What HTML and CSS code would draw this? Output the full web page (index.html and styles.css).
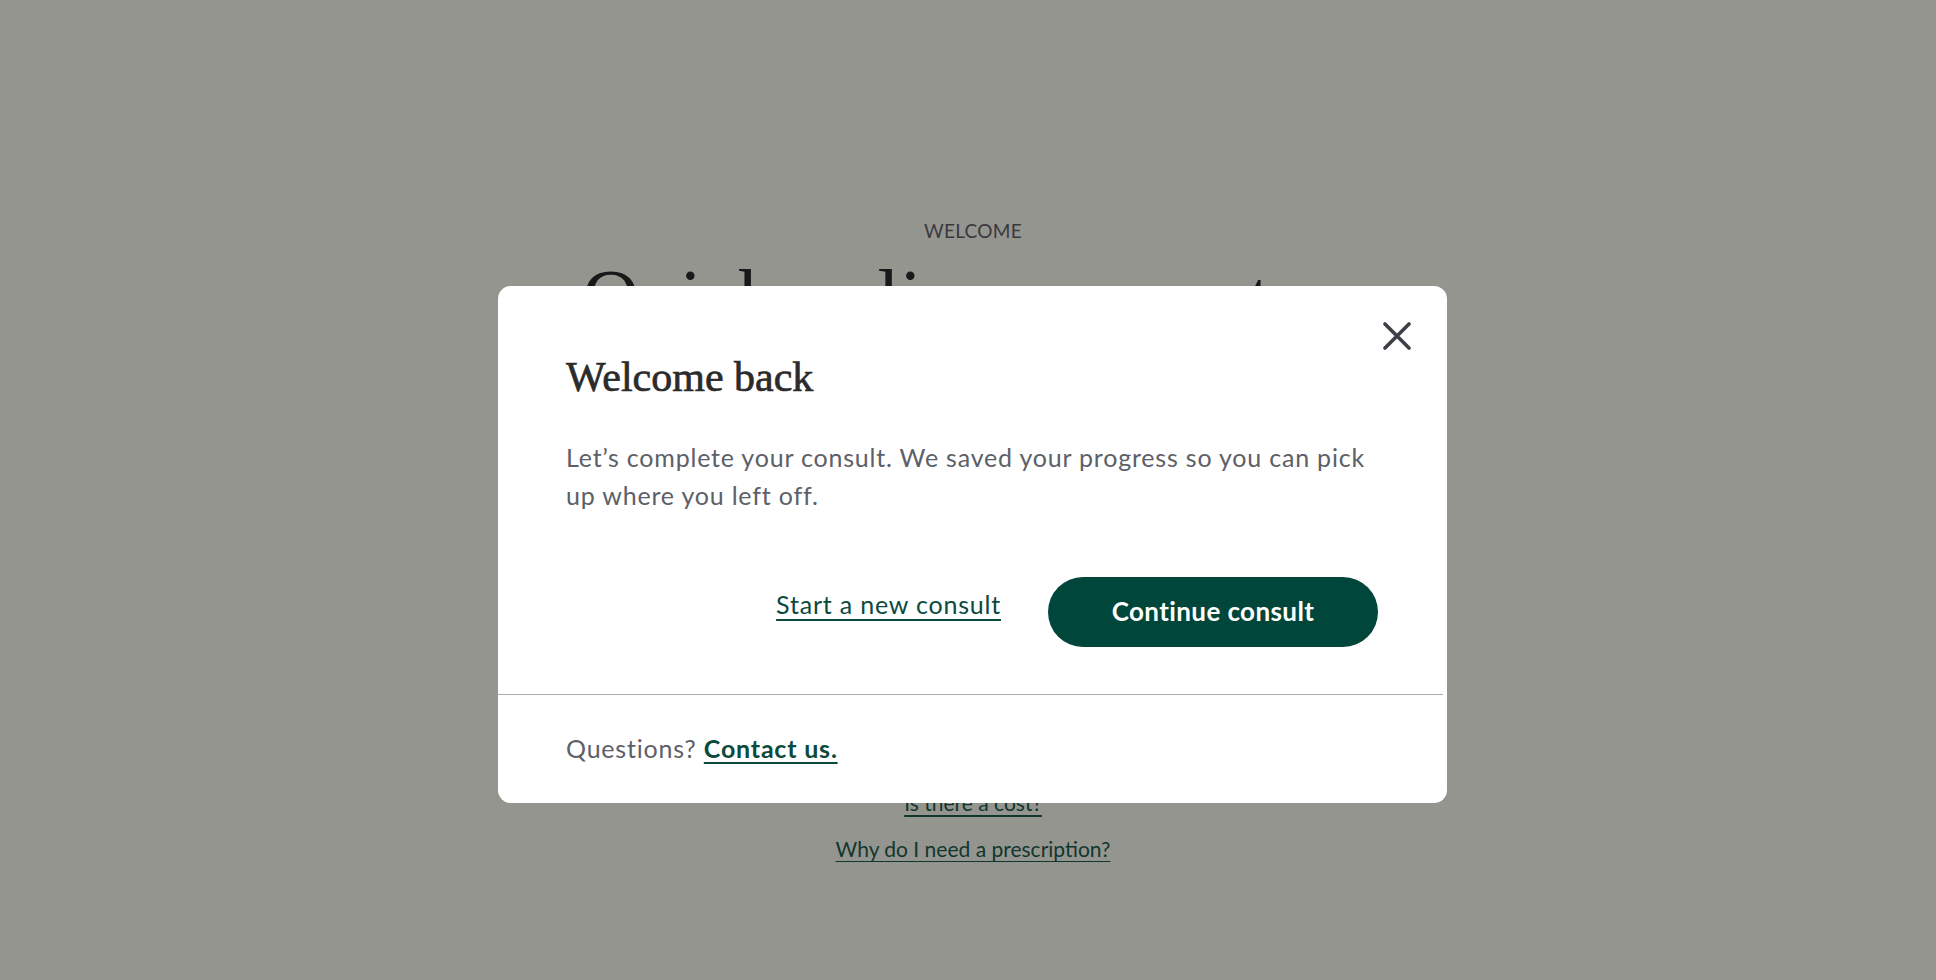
FILE: index.html
```html
<!DOCTYPE html>
<html lang="en">
<head>
    <meta charset="UTF-8">
    <meta name="viewport" content="width=device-width, initial-scale=1.0">
    <title>Welcome</title>
    <link rel="stylesheet" href="styles.css">
</head>
<body>

    <main class="page">
        <p class="eyebrow">WELCOME</p>
        <h1 class="page-title">Quick online encounters</h1>

        <div class="faq">
            <a href="#">Is there a cost?</a>
            <a href="#">Why do I need a prescription?</a>
        </div>
    </main>

    <!-- resume modal -->
    <div class="overlay">
        <div class="modal">
            <button class="close-btn" aria-label="Close">
                <svg width="28" height="28" viewBox="0 0 28 28">
                    <path d="M2 2 L26 26 M26 2 L2 26" stroke="#3b4048" stroke-width="3.6" stroke-linecap="round" fill="none"/>
                </svg>
            </button>

            <div class="modal-body">
                <h2>Welcome back</h2>
                <p>Let’s complete your consult. We saved your progress so you can pick up where you left off.</p>

                <div class="modal-actions">
                    <a href="#" class="new-link">Start a new consult</a>
                    <button class="continue-btn">Continue consult</button>
                </div>
            </div>

            <hr class="divider">

            <div class="modal-footer">
                Questions? <a href="#">Contact us.</a>
            </div>
        </div>
    </div>

</body>
</html>
```

FILE: styles.css
```css
* {
    box-sizing: border-box;
}

body {
    margin: 0;
    background: #f8f8f0;
    font-family: 'Lato', 'Liberation Sans', sans-serif;
    color: #2b2b2b;
}

.page {
    padding-top: 219px;
    padding-left: 10px;
    text-align: center;
}

.eyebrow {
    margin: 0;
    font-size: 19px;
    line-height: 24px;
    color: #5f5f68;
    letter-spacing: 0.3px;
}

.page-title {
    margin: 11px 0 0;
    font-family: 'Liberation Serif', serif;
    font-weight: 400;
    font-size: 80px;
    line-height: 88px;
    color: #2b2b2b;
}

.faq {
    margin-top: 448px;
    display: flex;
    flex-direction: column;
    align-items: center;
    gap: 20px;
}

.faq a {
    font-size: 21px;
    line-height: 26px;
    color: #1c5c4d;
    text-underline-offset: 4px;
}

.overlay {
    position: fixed;
    inset: 0;
    background: rgba(0, 0, 0, 0.4);
    display: flex;
    justify-content: center;
    align-items: flex-start;
    padding-top: 286px;
    padding-left: 9px;
}

.modal {
    position: relative;
    width: 949px;
    background: #fff;
    border-radius: 13px;
}

.close-btn {
    position: absolute;
    top: 36px;
    right: 36px;
    width: 28px;
    height: 28px;
    padding: 0;
    border: none;
    background: none;
    cursor: pointer;
}

.close-btn svg {
    display: block;
}

.modal-body {
    padding: 67px 69px 47px 68px;
}

.modal-body h2 {
    margin: 0;
    font-family: 'Liberation Serif', serif;
    font-weight: 400;
    font-size: 42px;
    line-height: 48px;
    color: #2b2b2b;
    -webkit-text-stroke: 0.7px #2b2b2b;
}

.modal-body p {
    margin: 37px 0 0;
    font-size: 25px;
    line-height: 38px;
    letter-spacing: 0.8px;
    color: #5c6068;
}

.modal-actions {
    margin-top: 63px;
    display: flex;
    justify-content: flex-end;
    align-items: center;
    gap: 47px;
}

.new-link {
    margin-bottom: 16px;
    font-size: 25px;
    line-height: 30px;
    letter-spacing: 0.8px;
    color: #0b4a3d;
    text-decoration: underline;
    text-decoration-thickness: 2px;
    text-underline-offset: 5px;
}

.continue-btn {
    width: 330px;
    height: 70px;
    padding: 0 0 3px;
    border: none;
    border-radius: 35px;
    background: #00463a;
    color: #fff;
    font-family: 'Lato', 'Liberation Sans', sans-serif;
    font-size: 26px;
    font-weight: 700;
    letter-spacing: 0.4px;
    cursor: pointer;
}

.divider {
    margin: 0 4px 0 0;
    border: none;
    border-top: 1px solid #ababab;
}

.modal-footer {
    padding: 38px 69px 40px 68px;
    font-size: 25px;
    line-height: 30px;
    letter-spacing: 0.8px;
    color: #5c6068;
}

.modal-footer a {
    font-weight: 700;
    color: #0b4a3d;
    text-decoration-thickness: 2px;
    text-underline-offset: 4px;
}
```
